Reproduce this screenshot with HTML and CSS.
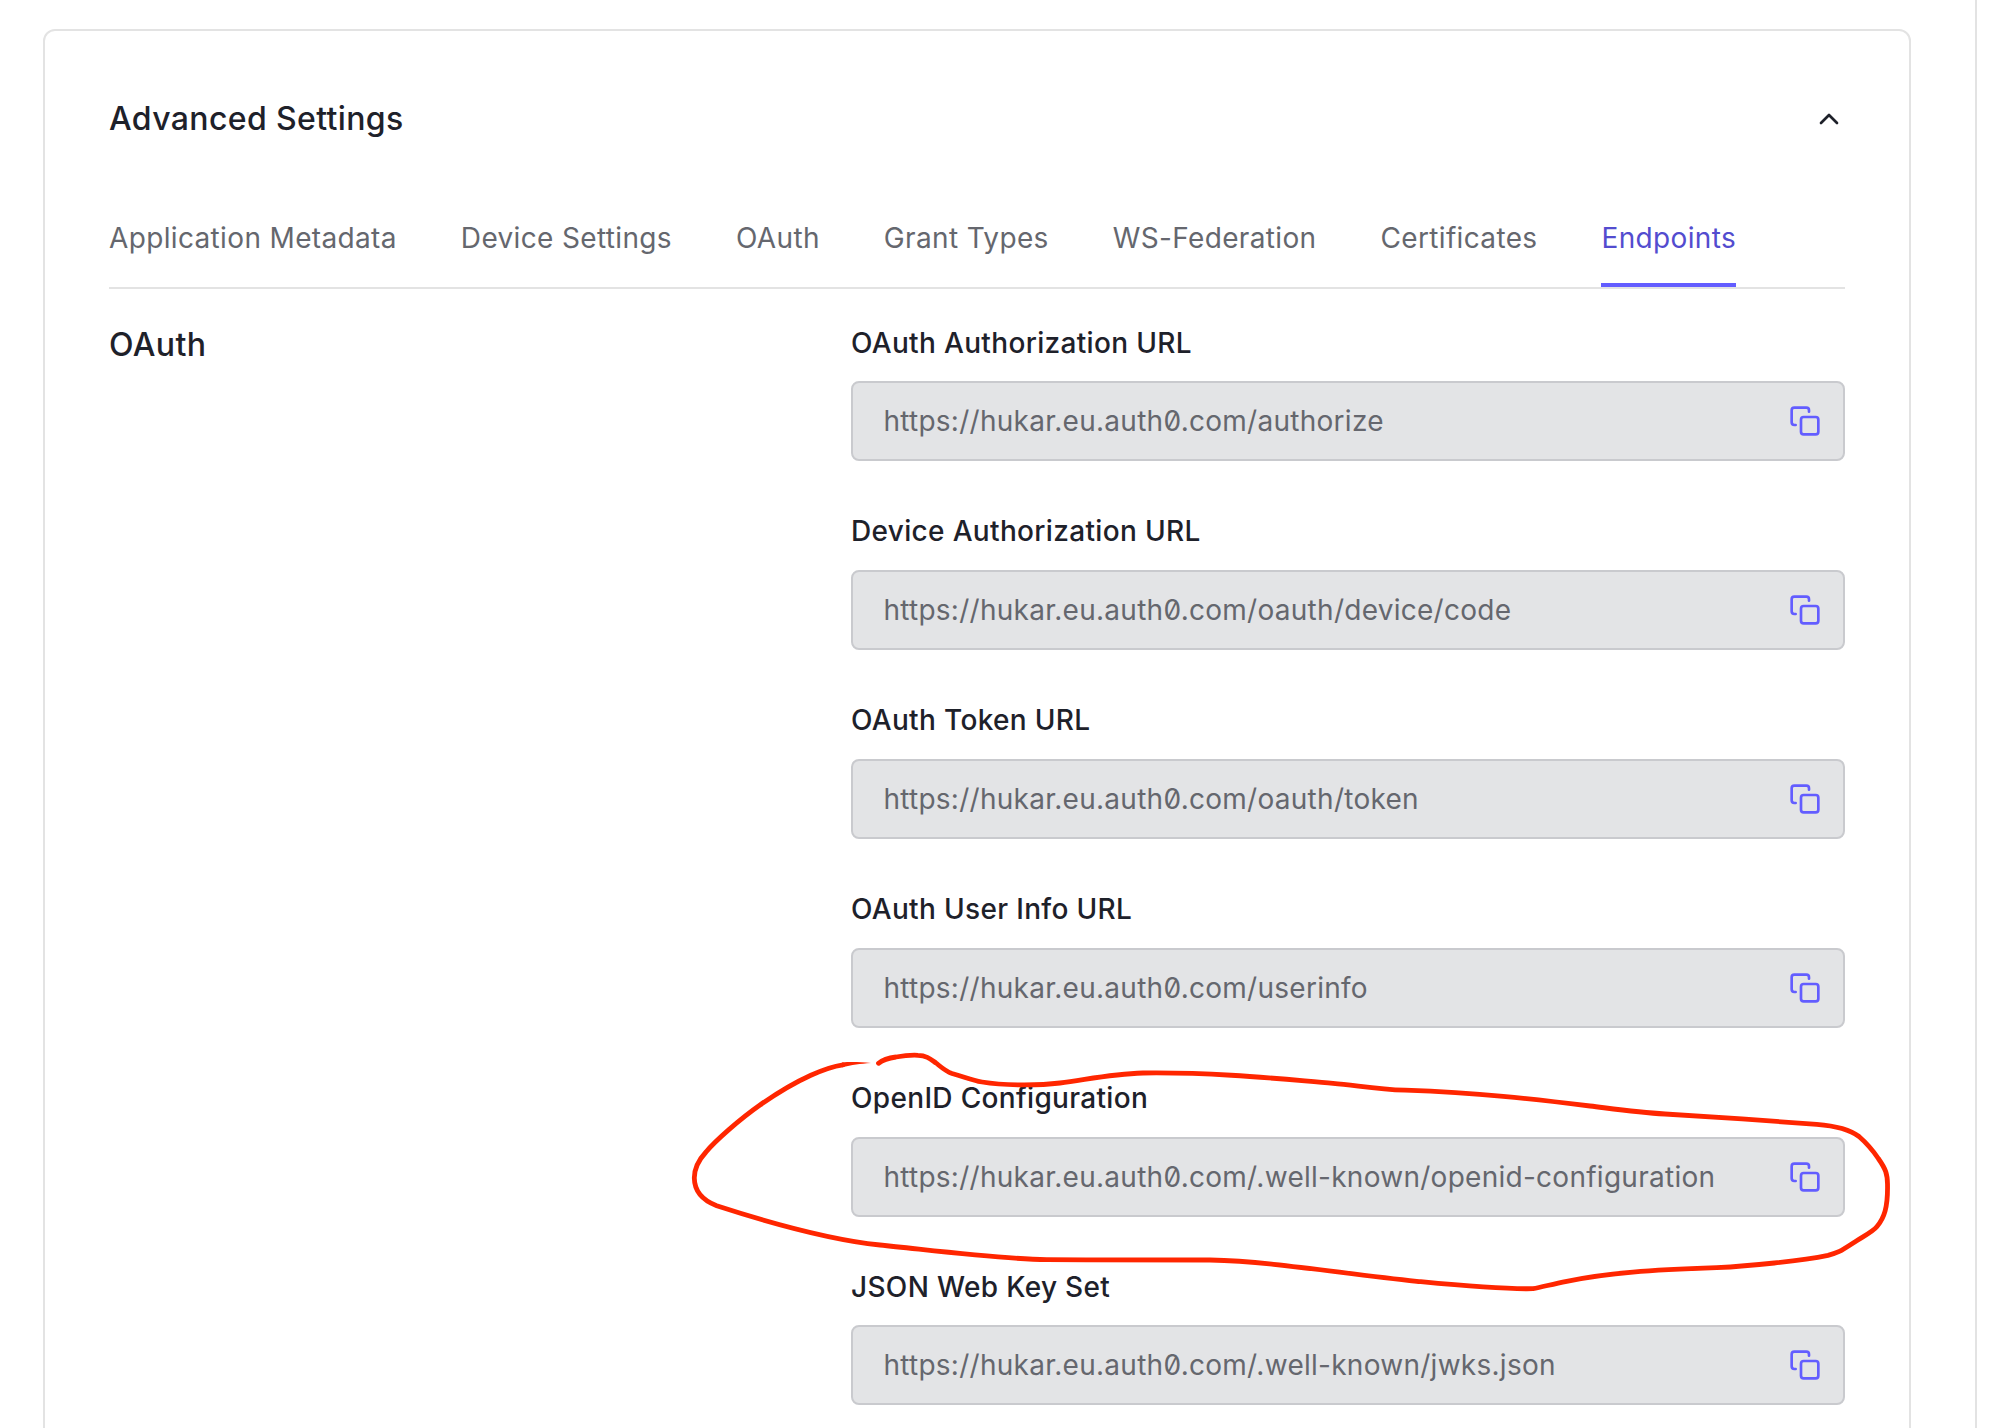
FILE: index.html
```html
<!DOCTYPE html>
<html lang="en">
<head>
<meta charset="utf-8">
<title>Advanced Settings</title>
<link rel="stylesheet" href="styles.css">
</head>
<body>
<svg class="sprite" aria-hidden="true">
  <symbol id="copy" viewBox="0 0 24 24">
    <rect x="9" y="9" width="13" height="13" rx="2"/>
    <path d="M5 15H4a2 2 0 0 1-2-2V4a2 2 0 0 1 2-2h9a2 2 0 0 1 2 2v1"/>
  </symbol>
</svg>
<main class="page">
  <section class="card">
    <header class="card-header">
      <h2 class="title">Advanced Settings</h2>
      <svg class="icon chevron" viewBox="0 0 24 24"><path d="M18 15l-6-6-6 6"/></svg>
    </header>
    <nav class="tabs">
      <a class="tab">Application Metadata</a>
      <a class="tab">Device Settings</a>
      <a class="tab">OAuth</a>
      <a class="tab">Grant Types</a>
      <a class="tab">WS-Federation</a>
      <a class="tab">Certificates</a>
      <a class="tab active">Endpoints</a>
    </nav>
    <div class="section">
      <h3 class="title">OAuth</h3>
      <div class="fields">
        <div class="field"><label class="label">OAuth Authorization URL</label><div class="input"><span>https://hukar.eu.auth0.com/authorize</span><svg class="icon"><use href="#copy"/></svg></div></div>
        <div class="field"><label class="label">Device Authorization URL</label><div class="input"><span>https://hukar.eu.auth0.com/oauth/device/code</span><svg class="icon"><use href="#copy"/></svg></div></div>
        <div class="field"><label class="label">OAuth Token URL</label><div class="input"><span>https://hukar.eu.auth0.com/oauth/token</span><svg class="icon"><use href="#copy"/></svg></div></div>
        <div class="field"><label class="label">OAuth User Info URL</label><div class="input"><span>https://hukar.eu.auth0.com/userinfo</span><svg class="icon"><use href="#copy"/></svg></div></div>
        <div class="field"><label class="label">OpenID Configuration</label><div class="input"><span>https://hukar.eu.auth0.com/.well-known/openid-configuration</span><svg class="icon"><use href="#copy"/></svg></div></div>
        <div class="field"><label class="label">JSON Web Key Set</label><div class="input"><span>https://hukar.eu.auth0.com/.well-known/jwks.json</span><svg class="icon"><use href="#copy"/></svg></div></div>
      </div>
    </div>
  </section>
</main>
<svg class="markup" viewBox="0 0 2002 1428" aria-hidden="true">
  <path class="stroke" d="M878.5 1063.3C883 1059.5 888 1058 896 1057C904 1055.6 912 1055 918 1055.3C927 1055.5 931 1059.5 936 1063C944 1069.5 946 1071.5 952 1073.5C965 1077 971 1080 982 1082C1006 1086 1040 1085.5 1060 1083C1085 1080 1110 1074 1143 1073C1220 1072 1290 1080 1333 1083.3C1355 1085 1375 1089 1405 1090.2C1480 1093 1530 1098.5 1590 1106C1630 1111 1640 1112.5 1665 1114C1700 1116 1780 1121.5 1816.7 1124.3C1832 1125.5 1850 1129.5 1859 1136.5C1867 1143.5 1874 1152 1878.3 1158.5C1886 1169.5 1887.3 1174 1887.5 1184C1888 1208 1884 1218 1877 1226.5C1873 1231.5 1864 1236 1856.7 1240.7C1840 1251.5 1839 1252.5 1828 1255.3C1800 1261 1750 1266 1716.7 1267.7C1650 1270 1610 1272.5 1566.7 1281.3C1552 1284.3 1542 1287 1533 1288.7C1500 1289.5 1455 1285 1416.7 1281.3C1340 1273.5 1275 1261.5 1210 1260C1150 1259.5 1100 1260 1046.7 1259.7C1000 1259 930 1250 880 1245C828 1239.5 770 1223 716.7 1205.7C703 1200.5 694.5 1192 694.3 1178C694.3 1168 700 1158.5 706 1152C715 1141 740 1119 760 1105C800 1077 828 1067 843 1064.8"/>
  <path class="tip" d="M842 1062.5C850 1061.8 860 1062 871 1063C860 1063.8 852 1065 842 1067.2z"/>
</svg>
</body>
</html>
```
FILE: styles.css
```css
* { box-sizing: border-box; }

body {
  margin: 0;
  height: 1428px;
  overflow: hidden;
  background: #fff;
  color: #1e212a;
  font-family: Inter, "Liberation Sans", sans-serif;
  font-size: 28px;
  font-optical-sizing: none;
  font-feature-settings: "zero";
}

.sprite { display: none; }

.page {
  width: 1977px;
  height: 1428px;
  padding: 29px 64px 0 43px;
  border-right: 2px solid #e3e3e3;
  overflow: hidden;
}

.card {
  height: 1500px;
  padding: 64px;
  border: 2px solid #e3e3e3;
  border-radius: 12px;
}

.card-header {
  display: flex;
  align-items: center;
  justify-content: space-between;
  height: 48px;
}

.title {
  margin: 0;
  font-size: 32px;
  font-weight: 500;
  line-height: 48px;
  letter-spacing: 0.37px;
}

.icon {
  flex: none;
  width: 32px;
  height: 32px;
  fill: none;
  stroke: #635dff;
  stroke-width: 2;
  stroke-linecap: round;
  stroke-linejoin: round;
}

.chevron { stroke: #1e212a; }

.tabs {
  display: flex;
  gap: 64px;
  height: 100px;
  margin-top: 46px;
  border-bottom: 2px solid #e3e3e3;
}

.tab {
  padding-top: 27px;
  color: #65676e;
  line-height: 44px;
  letter-spacing: 0.35px;
  border-bottom: 4px solid transparent;
}

.tab.active {
  color: #534ccf;
  border-bottom-color: #635dff;
}

.section {
  display: grid;
  grid-template-columns: 1fr 994px;
  padding-top: 31.6px;
}

.fields {
  display: flex;
  flex-direction: column;
  gap: 48px;
}

.label {
  display: block;
  height: 44px;
  margin-bottom: 16.8px;
  font-weight: 500;
  line-height: 44px;
  letter-spacing: 0.33px;
}

.input {
  display: flex;
  align-items: center;
  justify-content: space-between;
  height: 80px;
  padding: 0 22px 0 30.4px;
  color: #65676e;
  letter-spacing: 0.27px;
  background: #e3e4e6;
  border: 2px solid #c9cace;
  border-radius: 8px;
}

.markup {
  position: absolute;
  top: 0;
  left: 0;
  width: 2002px;
  height: 1428px;
  pointer-events: none;
}

.stroke {
  fill: none;
  stroke: #ff2600;
  stroke-width: 4.8;
  stroke-linecap: round;
  stroke-linejoin: round;
}

.tip { fill: #ff2600; }
```
